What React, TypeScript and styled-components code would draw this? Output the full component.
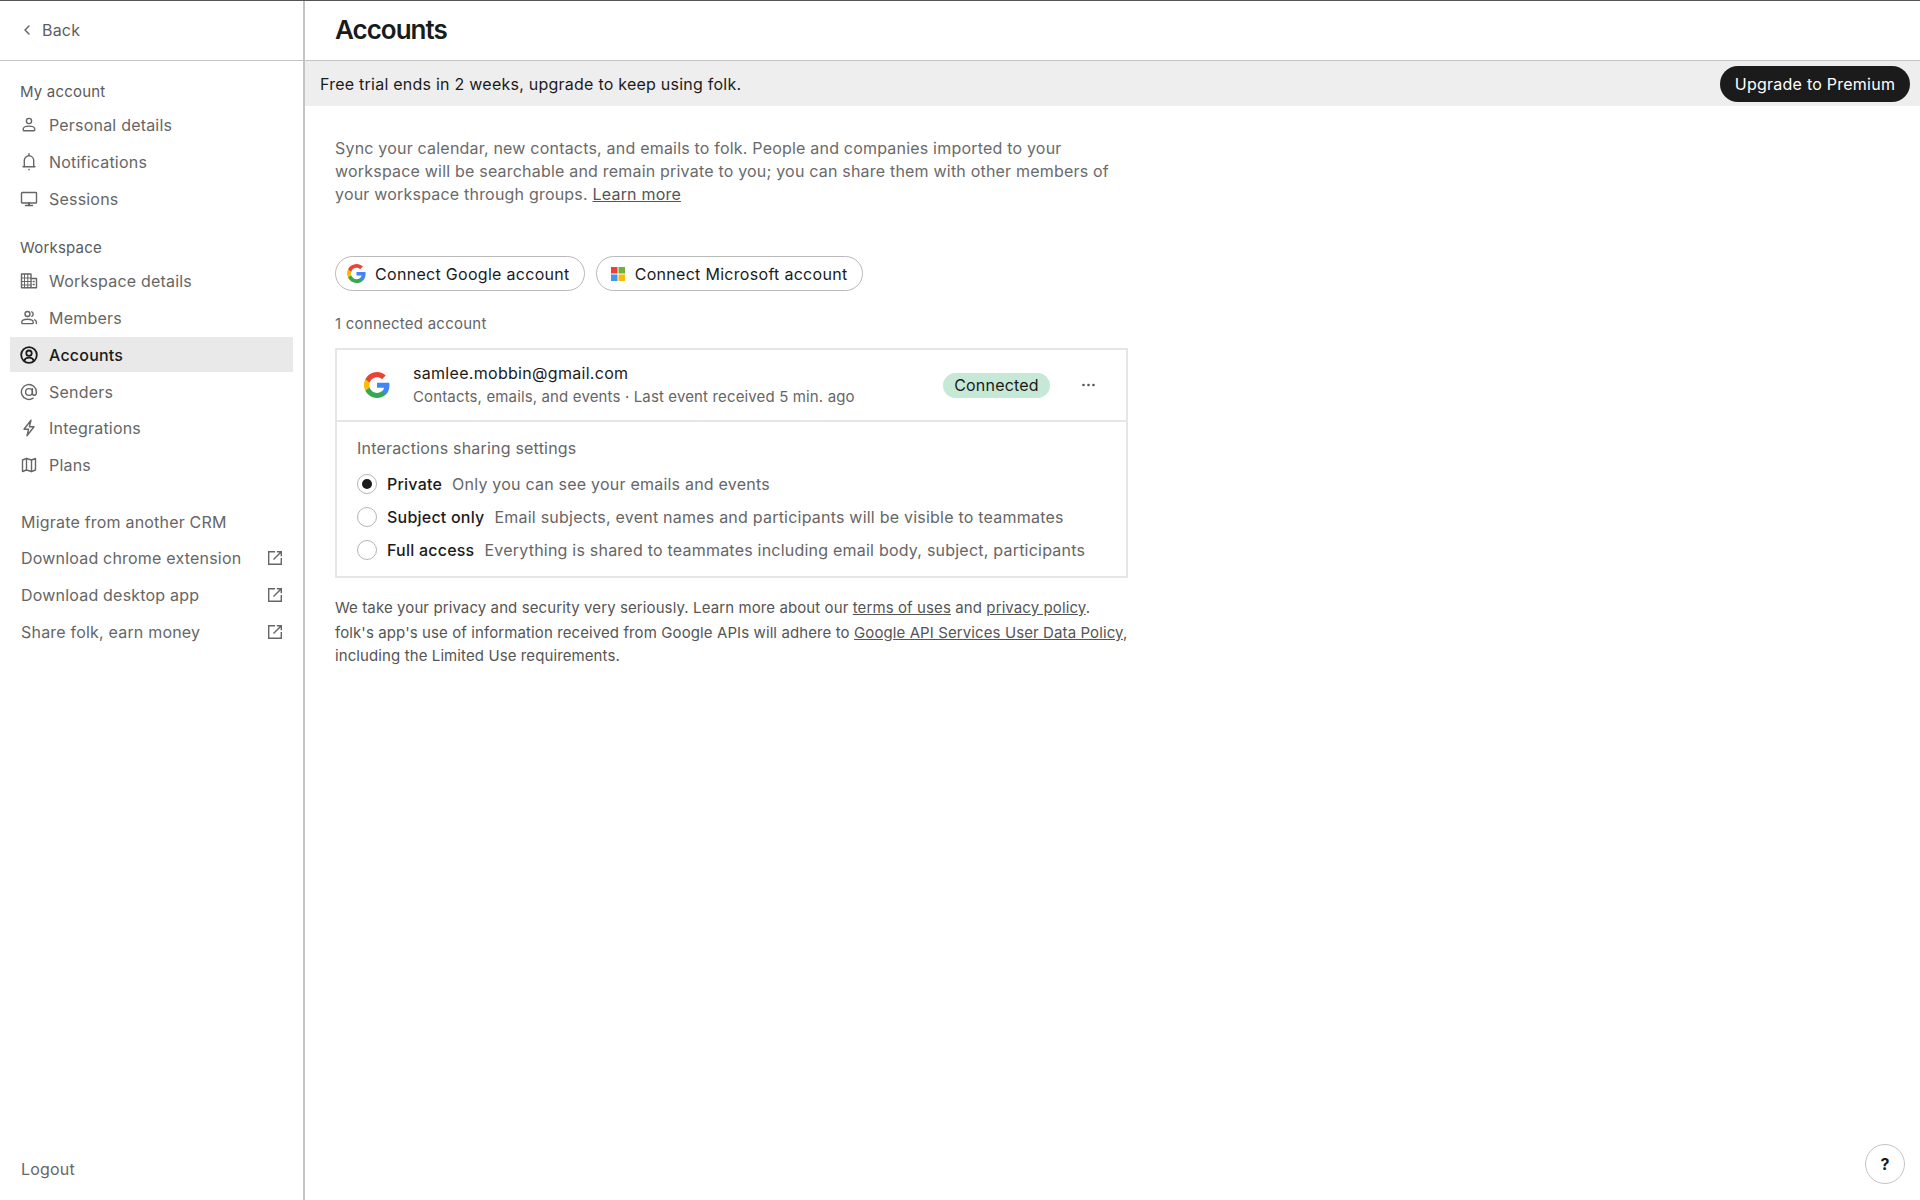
import { ReactNode } from "react";
import styled, { createGlobalStyle } from "styled-components";
import { ChevronLeft } from "lucide-react";

const GlobalStyle = createGlobalStyle`
  html, body {
    margin: 0;
    padding: 0;
    height: 100%;
    background: #fff;
    font-family: Inter, "Liberation Sans", sans-serif;
    letter-spacing: 0.2px;
    color: #1b1b1b;
  }
  * { box-sizing: border-box; }
`;

const Page = styled.div`
  display: flex;
  height: 1200px;
  border-top: 1px solid #555;
  overflow: hidden;
`;

const Sidebar = styled.aside`
  width: 305px;
  flex-shrink: 0;
  display: flex;
  flex-direction: column;
  border-right: 2px solid #c4c4c4;
`;

const BackBar = styled.div`
  height: 60px;
  flex-shrink: 0;
  display: flex;
  align-items: center;
  gap: 7px;
  padding: 0 0 1px 19px;
  border-bottom: 1px solid #c4c4c4;
  font-size: 16px;
  color: #5e5e5e;
`;

const Nav = styled.nav`
  flex: 1;
  display: flex;
  flex-direction: column;
  padding: 15px 10px 0;
`;

const SectionLabel = styled.div`
  height: 30px;
  display: flex;
  align-items: center;
  padding-left: 10px;
  font-size: 15px;
  color: #5a5a5a;
`;

const NavGroup = styled.div`
  display: flex;
  flex-direction: column;
  gap: 1.75px;
  margin-bottom: 15.75px;
`;

const NavRow = styled.div<{ $active?: boolean }>`
  height: 35px;
  display: flex;
  align-items: center;
  gap: 11px;
  padding-left: 10px;
  font-size: 16px;
  font-weight: ${({ $active }) => ($active ? 500 : 400)};
  color: ${({ $active }) => ($active ? "#1b1b1b" : "#666")};
  background: ${({ $active }) => ($active ? "#e9e9e9" : "transparent")};
`;

const NavIcon = styled.svg<{ $active?: boolean }>`
  width: 18px;
  height: 18px;
  flex-shrink: 0;
  fill: none;
  stroke: currentColor;
  stroke-width: ${({ $active }) => ($active ? 1.8 : 1.4)};
  stroke-linecap: round;
  stroke-linejoin: round;
`;

const LinkList = styled.div`
  display: flex;
  flex-direction: column;
  gap: 1.75px;
  margin-top: 5.75px;
`;

const LinkRow = styled.div`
  height: 35px;
  display: flex;
  align-items: center;
  justify-content: space-between;
  padding: 0 10px 0 11px;
  font-size: 16px;
  color: #666;
`;

const ExternalIcon = styled.svg`
  width: 16px;
  height: 16px;
  fill: none;
  stroke: #666;
  stroke-width: 1.4;
`;

const Logout = styled(LinkRow)`
  margin-top: auto;
  margin-bottom: 14px;
`;

const Main = styled.main`
  flex: 1;
  position: relative;
  display: flex;
  flex-direction: column;
  min-width: 0;
`;

const TitleBar = styled.header`
  height: 60px;
  flex-shrink: 0;
  display: flex;
  align-items: center;
  padding: 0 0 2px 30px;
  border-bottom: 1px solid #c4c4c4;
`;

const Title = styled.h1`
  margin: 0;
  font-size: 26px;
  font-weight: 600;
  letter-spacing: -1px;
  color: #1b1b1b;
`;

const Banner = styled.div`
  height: 45px;
  flex-shrink: 0;
  display: flex;
  align-items: center;
  justify-content: space-between;
  padding: 0 10px 0 15px;
  background: #eeeeee;
  font-size: 16px;
  letter-spacing: 0.24px;
  color: #1b1b1b;
`;

const UpgradeButton = styled.button`
  height: 36px;
  width: 190px;
  border: none;
  border-radius: 18px;
  background: #1b1b1b;
  color: #fff;
  font: inherit;
  letter-spacing: inherit;
`;

const Content = styled.div`
  width: 840px;
  padding: 31px 0 0 30px;
  display: flex;
  flex-direction: column;
`;

const Intro = styled.p`
  margin: 0;
  width: 790px;
  font-size: 16px;
  line-height: 23px;
  color: #6a6a6a;

  a {
    color: #555;
    text-decoration: underline;
  }
`;

const ConnectRow = styled.div`
  display: flex;
  gap: 11px;
  margin-top: 50px;
`;

const ConnectButton = styled.button<{ $inset: number }>`
  height: 35px;
  display: flex;
  align-items: center;
  gap: 9px;
  padding: 0 14px 0 ${({ $inset }) => $inset}px;
  border: 1px solid #b9b9b9;
  border-radius: 18px;
  background: #fff;
  font: inherit;
  letter-spacing: 0.3px;
  font-size: 16px;
  color: #1b1b1b;
`;

const ConnectedCount = styled.div`
  margin-top: 23px;
  font-size: 15px;
  line-height: 20px;
  letter-spacing: 0.24px;
  color: #666;
`;

const AccountCard = styled.section`
  margin-top: 14px;
  width: 793px;
  border: 2px solid #e6e6e6;
`;

const AccountHeader = styled.div`
  height: 72px;
  display: flex;
  align-items: center;
  padding: 0 31px 0 27px;
  border-bottom: 2px solid #e6e6e6;
`;

const AccountInfo = styled.div`
  flex: 1;
  display: flex;
  flex-direction: column;
  gap: 3px;
  margin-left: 23px;
  padding-bottom: 2px;
`;

const AccountEmail = styled.div`
  font-size: 16px;
  line-height: 22px;
  letter-spacing: 0.3px;
  color: #1b1b1b;
`;

const AccountMeta = styled.div`
  font-size: 15px;
  line-height: 20px;
  letter-spacing: 0.14px;
  color: #666;
`;

const StatusPill = styled.div`
  height: 25px;
  width: 107px;
  display: flex;
  align-items: center;
  justify-content: center;
  border-radius: 13px;
  background: #c6e8d6;
  font-size: 16px;
  color: #1b1b1b;
`;

const MoreDots = styled.svg`
  width: 13px;
  height: 4px;
  margin-left: 32px;
  fill: #555;
`;

const SharingPanel = styled.div`
  padding: 15px 20px 10px;
`;

const SharingTitle = styled.div`
  font-size: 16px;
  line-height: 22px;
  color: #666;
  margin-bottom: 8px;
`;

const RadioRow = styled.div`
  height: 33px;
  display: flex;
  align-items: center;
  font-size: 16px;
  letter-spacing: 0.22px;
`;

const RadioCircle = styled.span<{ $checked?: boolean }>`
  width: 20px;
  height: 20px;
  flex-shrink: 0;
  display: flex;
  align-items: center;
  justify-content: center;
  border: 1px solid #b5b5b5;
  border-radius: 50%;
  margin-right: 10px;

  &::after {
    content: "";
    width: 10px;
    height: 10px;
    border-radius: 50%;
    background: ${({ $checked }) => ($checked ? "#1b1b1b" : "transparent")};
  }
`;

const RadioLabel = styled.span`
  font-weight: 500;
  color: #1b1b1b;
  margin-right: 10px;
`;

const RadioHint = styled.span`
  color: #666;
`;

const Legal = styled.div`
  margin-top: 18px;
  width: 810px;
  font-size: 15px;
  line-height: 23px;
  letter-spacing: 0.1px;
  color: #555;

  a {
    color: #555;
    text-decoration: underline;
  }
`;

const LegalLead = styled.p`
  margin: 0 0 2px;
`;

const LegalRest = styled.p`
  margin: 0;
`;

const HelpButton = styled.button`
  position: absolute;
  right: 15px;
  bottom: 16px;
  width: 40px;
  height: 40px;
  border: 1px solid #c4c4c4;
  border-radius: 50%;
  background: #fff;
  font: inherit;
  font-size: 16px;
  font-weight: 700;
  color: #1b1b1b;
`;

const GoogleLogo = ({ size }: { size: number }) => (
  <svg width={size} height={size} viewBox="0 0 24 24" style={{ flexShrink: 0 }}>
    <path fill="#4285F4" d="M23.5 12.3c0-.8-.1-1.600-.2-2.300H12v4.500h6.500c-.3 1.500-1.100 2.700-2.400 3.600v3h3.900c2.300-2.100 3.500-5.200 3.500-8.800z" />
    <path fill="#34A853" d="M12 24c3.200 0 6-1.100 8-2.900l-3.900-3c-1.100.7-2.500 1.200-4.100 1.200-3.100 0-5.800-2.100-6.700-5H1.300v3.100C3.300 21.300 7.300 24 12 24z" />
    <path fill="#FBBC05" d="M5.300 14.300c-.2-.7-.4-1.500-.4-2.300s.1-1.600.4-2.300V6.600h-4C.5 8.200 0 10 0 12s.5 3.800 1.300 5.400l4-3.100z" />
    <path fill="#EA4335" d="M12 4.800c1.800 0 3.300.6 4.600 1.800l3.400-3.400C18 1.200 15.200 0 12 0 7.300 0 3.300 2.700 1.300 6.600l4 3.100c.9-2.800 3.600-4.900 6.700-4.900z" />
  </svg>
);

const MicrosoftLogo = () => (
  <svg width="14" height="14" viewBox="0 0 14 14" style={{ flexShrink: 0, marginRight: 1 }}>
    <rect width="6.500" height="6.500" fill="#EA4335" />
    <rect x="7.500" width="6.500" height="6.500" fill="#6FB23A" />
    <rect y="7.500" width="6.500" height="6.500" fill="#3F97EE" />
    <rect x="7.500" y="7.500" width="6.500" height="6.500" fill="#FBBC05" />
  </svg>
);

const PersonGlyph = () => (
  <>
    <circle cx="9" cy="5" r="2.600" />
    <path d="M3.200 13.200c0-1.900 2.600-3.100 5.800-3.100s5.800 1.200 5.800 3.100v.6a1 1 0 0 1-1 1H4.200a1 1 0 0 1-1-1z" />
  </>
);

const BellGlyph = () => (
  <>
    <path d="M9 .8v1.600" />
    <path d="M4.300 13.500V7.500a4.700 4.700 0 0 1 9.400 0v6" />
    <path d="M3 13.800h12" />
    <path d="M9 16.500v.2" strokeWidth="1.600" />
  </>
);

const MonitorGlyph = () => (
  <>
    <rect x="1.500" y="2.500" width="15" height="10.500" rx=".6" />
    <path d="M9 13v2.300" strokeWidth="2" />
    <path d="M5.500 15.500h7" />
  </>
);

const BuildingGlyph = () => (
  <>
    <path d="M1.500 15.800V2h9.500v13.800zM11 6.500h5.500v9.300H11" />
    <path d="M1.500 6h9.500M1.500 9.500h9.500M1.500 13h9.500M4.500 2v13.800M7.800 2v13.800" strokeWidth="1" />
    <path d="M13.200 9.500h1M13.200 12.500h1" />
  </>
);

const MembersGlyph = () => (
  <>
    <circle cx="7.500" cy="5" r="2.500" />
    <path d="M1.800 13.300c0-1.900 2.300-3 5.700-3s5.700 1.100 5.700 3v.5a.8.8 0 0 1-.8.8H2.600a.8.8 0 0 1-.8-.8z" />
    <path d="M11.800 2.800a2.500 2.500 0 0 1 0 4.500" />
    <path d="M14.700 10.800c1 .5 1.700 1.400 1.700 2.500v1.300" />
  </>
);

const AccountGlyph = () => (
  <>
    <circle cx="9" cy="9" r="7.800" />
    <circle cx="9" cy="7.200" r="2.700" />
    <path d="M4.300 14.700c.6-2 2.500-3 4.700-3s4.100 1 4.700 3" />
  </>
);

const AtGlyph = () => (
  <>
    <circle cx="9" cy="9" r="3.400" />
    <path d="M12.400 5.600v4.600c0 1.200.9 2.100 2 2.100s2-1.200 2-3.300a7.500 7.500 0 1 0-3.300 6.200" />
  </>
);

const BoltGlyph = () => <path d="M11 1.200 4 10.200h4.600L7 16.800l7-9H9.400z" />;

const MapGlyph = () => (
  <>
    <path d="M2.500 4 6.500 2.500l5 1.500 4-1.500V14l-4 1.500-5-1.500-4 1.500z" />
    <path d="M6.500 2.500V14M11.500 4v11.500" />
  </>
);

const ExternalLink = () => (
  <ExternalIcon viewBox="0 0 16 16">
    <path d="M8 1.700H1.700v12.600h12.600V8" />
    <path d="M6.500 9.500 14.300 1.700M9.800 1.700h4.500v4.500" />
  </ExternalIcon>
);

type NavItem = { label: string; glyph: ReactNode; active?: boolean };

const accountItems: NavItem[] = [
  { label: "Personal details", glyph: <PersonGlyph /> },
  { label: "Notifications", glyph: <BellGlyph /> },
  { label: "Sessions", glyph: <MonitorGlyph /> },
];

const workspaceItems: NavItem[] = [
  { label: "Workspace details", glyph: <BuildingGlyph /> },
  { label: "Members", glyph: <MembersGlyph /> },
  { label: "Accounts", glyph: <AccountGlyph />, active: true },
  { label: "Senders", glyph: <AtGlyph /> },
  { label: "Integrations", glyph: <BoltGlyph /> },
  { label: "Plans", glyph: <MapGlyph /> },
];

const radioOptions = [
  { label: "Private", hint: "Only you can see your emails and events", checked: true },
  { label: "Subject only", hint: "Email subjects, event names and participants will be visible to teammates" },
  { label: "Full access", hint: "Everything is shared to teammates including email body, subject, participants" },
];

const NavItems = ({ items }: { items: NavItem[] }) => (
  <>
    {items.map((item) => (
      <NavRow key={item.label} $active={item.active}>
        <NavIcon viewBox="0 0 18 18" $active={item.active}>
          {item.glyph}
        </NavIcon>
        {item.label}
      </NavRow>
    ))}
  </>
);

const App = () => (
  <>
    <GlobalStyle />
    <Page>
      <Sidebar>
        <BackBar>
          <ChevronLeft size={16} />
          Back
        </BackBar>
        <Nav>
          <NavGroup>
            <SectionLabel>My account</SectionLabel>
            <NavItems items={accountItems} />
          </NavGroup>
          <NavGroup>
            <SectionLabel>Workspace</SectionLabel>
            <NavItems items={workspaceItems} />
          </NavGroup>
          <LinkList>
            <LinkRow>Migrate from another CRM</LinkRow>
            <LinkRow>
              Download chrome extension
              <ExternalLink />
            </LinkRow>
            <LinkRow>
              Download desktop app
              <ExternalLink />
            </LinkRow>
            <LinkRow>
              Share folk, earn money
              <ExternalLink />
            </LinkRow>
          </LinkList>
          <Logout>Logout</Logout>
        </Nav>
      </Sidebar>
      <Main>
        <TitleBar>
          <Title>Accounts</Title>
        </TitleBar>
        <Banner>
          Free trial ends in 2 weeks, upgrade to keep using folk.
          <UpgradeButton>Upgrade to Premium</UpgradeButton>
        </Banner>
        <Content>
          <Intro>
            Sync your calendar, new contacts, and emails to folk. People and companies imported to your
            workspace will be searchable and remain private to you; you can share them with other members of
            your workspace through groups. <a>Learn more</a>
          </Intro>
          <ConnectRow>
            <ConnectButton $inset={11}>
              <GoogleLogo size={19} />
              Connect Google account
            </ConnectButton>
            <ConnectButton $inset={14}>
              <MicrosoftLogo />
              Connect Microsoft account
            </ConnectButton>
          </ConnectRow>
          <ConnectedCount>1 connected account</ConnectedCount>
          <AccountCard>
            <AccountHeader>
              <GoogleLogo size={26} />
              <AccountInfo>
                <AccountEmail>samlee.mobbin@gmail.com</AccountEmail>
                <AccountMeta>Contacts, emails, and events · Last event received 5 min. ago</AccountMeta>
              </AccountInfo>
              <StatusPill>Connected</StatusPill>
              <MoreDots viewBox="0 0 13 4">
                <circle cx="1.500" cy="2" r="1.300" />
                <circle cx="6.500" cy="2" r="1.300" />
                <circle cx="11.500" cy="2" r="1.300" />
              </MoreDots>
            </AccountHeader>
            <SharingPanel>
              <SharingTitle>Interactions sharing settings</SharingTitle>
              {radioOptions.map((option) => (
                <RadioRow key={option.label}>
                  <RadioCircle $checked={option.checked} />
                  <RadioLabel>{option.label}</RadioLabel>
                  <RadioHint>{option.hint}</RadioHint>
                </RadioRow>
              ))}
            </SharingPanel>
          </AccountCard>
          <Legal>
            <LegalLead>
              We take your privacy and security very seriously. Learn more about our <a>terms of uses</a> and{" "}
              <a>privacy policy</a>.
            </LegalLead>
            <LegalRest>
              folk's app's use of information received from Google APIs will adhere to{" "}
              <a>Google API Services User Data Policy</a>,
              <br />
              including the Limited Use requirements.
            </LegalRest>
          </Legal>
        </Content>
        <HelpButton>?</HelpButton>
      </Main>
    </Page>
  </>
);

export default App;
